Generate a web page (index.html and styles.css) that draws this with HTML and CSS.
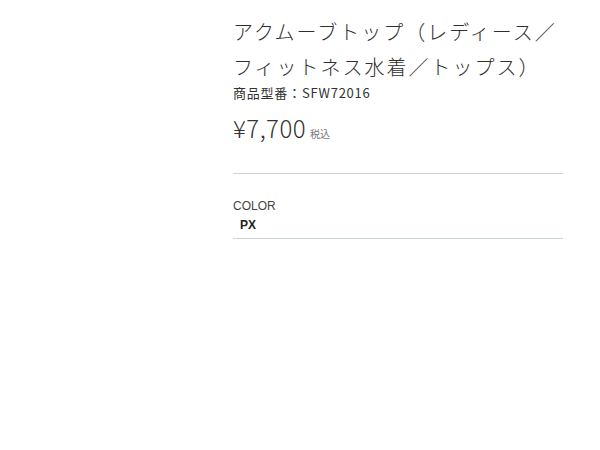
FILE: index.html
```html
<!DOCTYPE html>
<html lang="ja">
<head>
<meta charset="utf-8">
<link rel="stylesheet" href="styles.css">
</head>
<body>
<div class="page">
  <div class="product">
    <h1 class="title">アクムーブトップ（レディース／<br>フィットネス水着／トップス）</h1>
    <p class="model">商品型番：SFW72016</p>
    <div class="price"><span class="amount">¥7,700</span><span class="tax">税込</span></div>
    <div class="options">
      <div class="label">COLOR</div>
      <div class="value">PX</div>
    </div>
  </div>
</div>
</body>
</html>
```
FILE: styles.css
```css
html, body {
  margin: 0;
  padding: 0;
  background: #fff;
}
body {
  font-family: "Noto Sans CJK JP", "Noto Sans", sans-serif;
  color: #333;
}
.page {
  padding: 14px 0 0 233px;
}
.product {
  width: 330px;
}
.title {
  margin: 0;
  font-size: 20px;
  font-weight: 300;
  line-height: 35px;
  letter-spacing: 0.1em;
  color: #2e2e2e;
}
.model {
  margin: 0;
  font-size: 13px;
  line-height: 18px;
  letter-spacing: 0.06em;
}
.price {
  display: flex;
  align-items: baseline;
  gap: 4px;
  padding: 9px 0 28px;
  border-bottom: 1px solid #cad4db;
}
.amount {
  font-size: 24px;
  line-height: 34px;
  font-weight: 300;
  letter-spacing: 0.02em;
}
.tax {
  font-size: 10px;
  color: #777;
}
.options {
  padding: 24px 0 4px;
  border-bottom: 1px solid #cad4db;
}
.label {
  font-family: "Liberation Sans", sans-serif;
  font-size: 12px;
  line-height: 16px;
  color: #444;
}
.value {
  font-family: "Liberation Sans", sans-serif;
  font-size: 12px;
  font-weight: bold;
  line-height: 18px;
  padding-top: 2px;
  padding-left: 7px;
  color: #222;
}
```
